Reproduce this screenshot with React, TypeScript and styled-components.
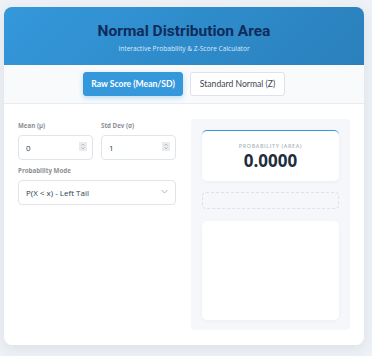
import React, { useState } from "react";
import styled, { createGlobalStyle } from "styled-components";

const Global = createGlobalStyle`
  html, body { margin: 0; padding: 0; background: #eef2f6; }
  body { font-family: "Open Sans", "Noto Sans", sans-serif; }
  * { box-sizing: border-box; }
  input[type=number]::-webkit-inner-spin-button,
  input[type=number]::-webkit-outer-spin-button { -webkit-appearance: none; margin: 0; }
`;

const Page = styled.div`
  padding: 7px 8px 12px 4px;
`;

const Card = styled.div`
  background: #ffffff;
  border-radius: 8px;
  overflow: hidden;
  box-shadow: 0 4px 14px rgba(40, 60, 90, 0.09);
`;

const Header = styled.header`
  height: 58px;
  background: linear-gradient(135deg, #3498db 0%, #2a80bb 100%);
  display: flex;
  flex-direction: column;
  align-items: center;
  justify-content: center;
  gap: 4px;
  padding-top: 2px;
`;

const Title = styled.h1`
  margin: 0;
  font-family: Roboto, "Noto Sans", sans-serif;
  font-size: 15.5px;
  font-weight: 700;
  color: #0f2c5c;
  line-height: 18px;
`;

const Subtitle = styled.p`
  margin: 0;
  font-size: 6.6px;
  color: #dceaf8;
  line-height: 9px;
`;

const TabBar = styled.nav`
  height: 39px;
  background: #f8fafc;
  border-bottom: 1px solid #e8edf2;
  display: flex;
  align-items: center;
  justify-content: center;
  gap: 7px;
`;

const TabButton = styled.button<{ $active?: boolean }>`
  height: 24px;
  padding: 0;
  border-radius: 3px;
  font-family: Lato, "Open Sans", sans-serif;
  font-size: 8.6px;
  white-space: nowrap;
  font-weight: ${(p) => (p.$active ? 700 : 400)};
  border: 1px solid ${(p) => (p.$active ? "#3498db" : "#dde3ea")};
  background: ${(p) => (p.$active ? "#3498db" : "#ffffff")};
  color: ${(p) => (p.$active ? "#ffffff" : "#3d4650")};
  box-shadow: ${(p) => (p.$active ? "0 2px 5px rgba(52,152,219,0.3)" : "none")};
  width: ${(p) => (p.$active ? "100px" : "95px")};
  cursor: pointer;
`;

const Body = styled.main`
  display: grid;
  grid-template-columns: 158px 159px;
  column-gap: 15px;
  padding: 15px 14px 15px 14px;
`;

const Controls = styled.section`
  display: flex;
  flex-direction: column;
  gap: 6px;
  padding-top: 2px;
`;

const Row = styled.div`
  display: grid;
  grid-template-columns: 1fr 1fr;
  gap: 8px;
`;

const Field = styled.label`
  display: flex;
  flex-direction: column;
  gap: 4px;
`;

const Label = styled.span`
  font-size: 6.2px;
  font-weight: 700;
  color: #8a8f96;
  line-height: 9px;
`;

const InputWrap = styled.div`
  position: relative;
`;

const NumberInput = styled.input`
  height: 25px;
  width: 100%;
  border: 1px solid #e1e5ea;
  border-radius: 4px;
  padding: 0 4px 0 7px;
  font-family: "Open Sans", sans-serif;
  font-size: 8px;
  color: #2c3e50;
  background: #fff;
  outline: none;
`;

const Spinner = styled.svg`
  position: absolute;
  right: 6px;
  top: 8px;
  pointer-events: none;
`;

const SelectWrap = styled.div`
  position: relative;
`;

const Select = styled.select`
  appearance: none;
  height: 25px;
  width: 100%;
  border: 1px solid #e1e5ea;
  border-radius: 4px;
  padding: 0 7px;
  font-family: "Open Sans", sans-serif;
  font-size: 8px;
  color: #2c3e50;
  background: #fff;
  outline: none;
`;

const Chevron = styled.svg`
  position: absolute;
  right: 8px;
  top: 10px;
  pointer-events: none;
`;

const Results = styled.section`
  background: #f5f7fa;
  border-radius: 4px;
  padding: 11px 11px 10px;
  display: flex;
  flex-direction: column;
  gap: 11px;
`;

const ResultCard = styled.div`
  height: 51px;
  background: #fff;
  border-radius: 5px;
  border-top: 1.5px solid #3498db;
  box-shadow: 0 1px 4px rgba(0, 0, 0, 0.04);
  display: flex;
  flex-direction: column;
  align-items: center;
  justify-content: center;
  gap: 1px;
`;

const ResultLabel = styled.span`
  font-size: 5.4px;
  letter-spacing: 0.6px;
  color: #aeb6be;
  font-weight: 600;
  line-height: 8px;
`;

const ResultValue = styled.span`
  font-size: 17px;
  font-weight: 700;
  color: #1f2d3d;
  line-height: 20px;
`;

const DashedBox = styled.div`
  height: 17px;
  border: 1px dashed #dde2e8;
  border-radius: 4px;
`;

const ChartBox = styled.div`
  height: 99px;
  margin-top: 1px;
  background: #fff;
  border-radius: 5px;
  box-shadow: 0 1px 4px rgba(0, 0, 0, 0.04);
`;

function SpinIcon() {
  return (
    <Spinner width="8" height="9" viewBox="0 0 8 9">
      <rect x="0" y="0" width="8" height="9" fill="#e9ebee" />
      <path d="M2.5 3.6 L4 2 L5.5 3.6" fill="none" stroke="#a3a9b0" strokeWidth="0.7" />
      <path d="M2.5 5.4 L4 7 L5.5 5.4" fill="none" stroke="#a3a9b0" strokeWidth="0.7" />
    </Spinner>
  );
}

export default function App() {
  const [mean, setMean] = useState("0");
  const [sd, setSd] = useState("1");
  return (
    <>
      <Global />
      <Page>
        <Card>
          <Header>
            <Title>Normal Distribution Area</Title>
            <Subtitle>Interactive Probability &amp; Z-Score Calculator</Subtitle>
          </Header>
          <TabBar>
            <TabButton $active>Raw Score (Mean/SD)</TabButton>
            <TabButton>Standard Normal (Z)</TabButton>
          </TabBar>
          <Body>
            <Controls>
              <Row>
                <Field>
                  <Label>Mean (μ)</Label>
                  <InputWrap>
                    <NumberInput type="number" value={mean} onChange={(e) => setMean(e.target.value)} />
                    <SpinIcon />
                  </InputWrap>
                </Field>
                <Field>
                  <Label>Std Dev (σ)</Label>
                  <InputWrap>
                    <NumberInput type="number" value={sd} onChange={(e) => setSd(e.target.value)} />
                    <SpinIcon />
                  </InputWrap>
                </Field>
              </Row>
              <Field as="div">
                <Label>Probability Mode</Label>
                <SelectWrap>
                  <Select defaultValue="left">
                    <option value="left">P(X &lt; x) - Left Tail</option>
                    <option value="right">P(X &gt; x) - Right Tail</option>
                    <option value="between">P(a &lt; X &lt; b) - Between</option>
                  </Select>
                  <Chevron width="7" height="5" viewBox="0 0 7 5">
                    <path d="M0.5 1 L3.5 4 L6.5 1" fill="none" stroke="#9aa3ad" strokeWidth="0.8" />
                  </Chevron>
                </SelectWrap>
              </Field>
            </Controls>
            <Results>
              <ResultCard>
                <ResultLabel>PROBABILITY (AREA)</ResultLabel>
                <ResultValue>0.0000</ResultValue>
              </ResultCard>
              <DashedBox />
              <ChartBox />
            </Results>
          </Body>
        </Card>
      </Page>
    </>
  );
}
